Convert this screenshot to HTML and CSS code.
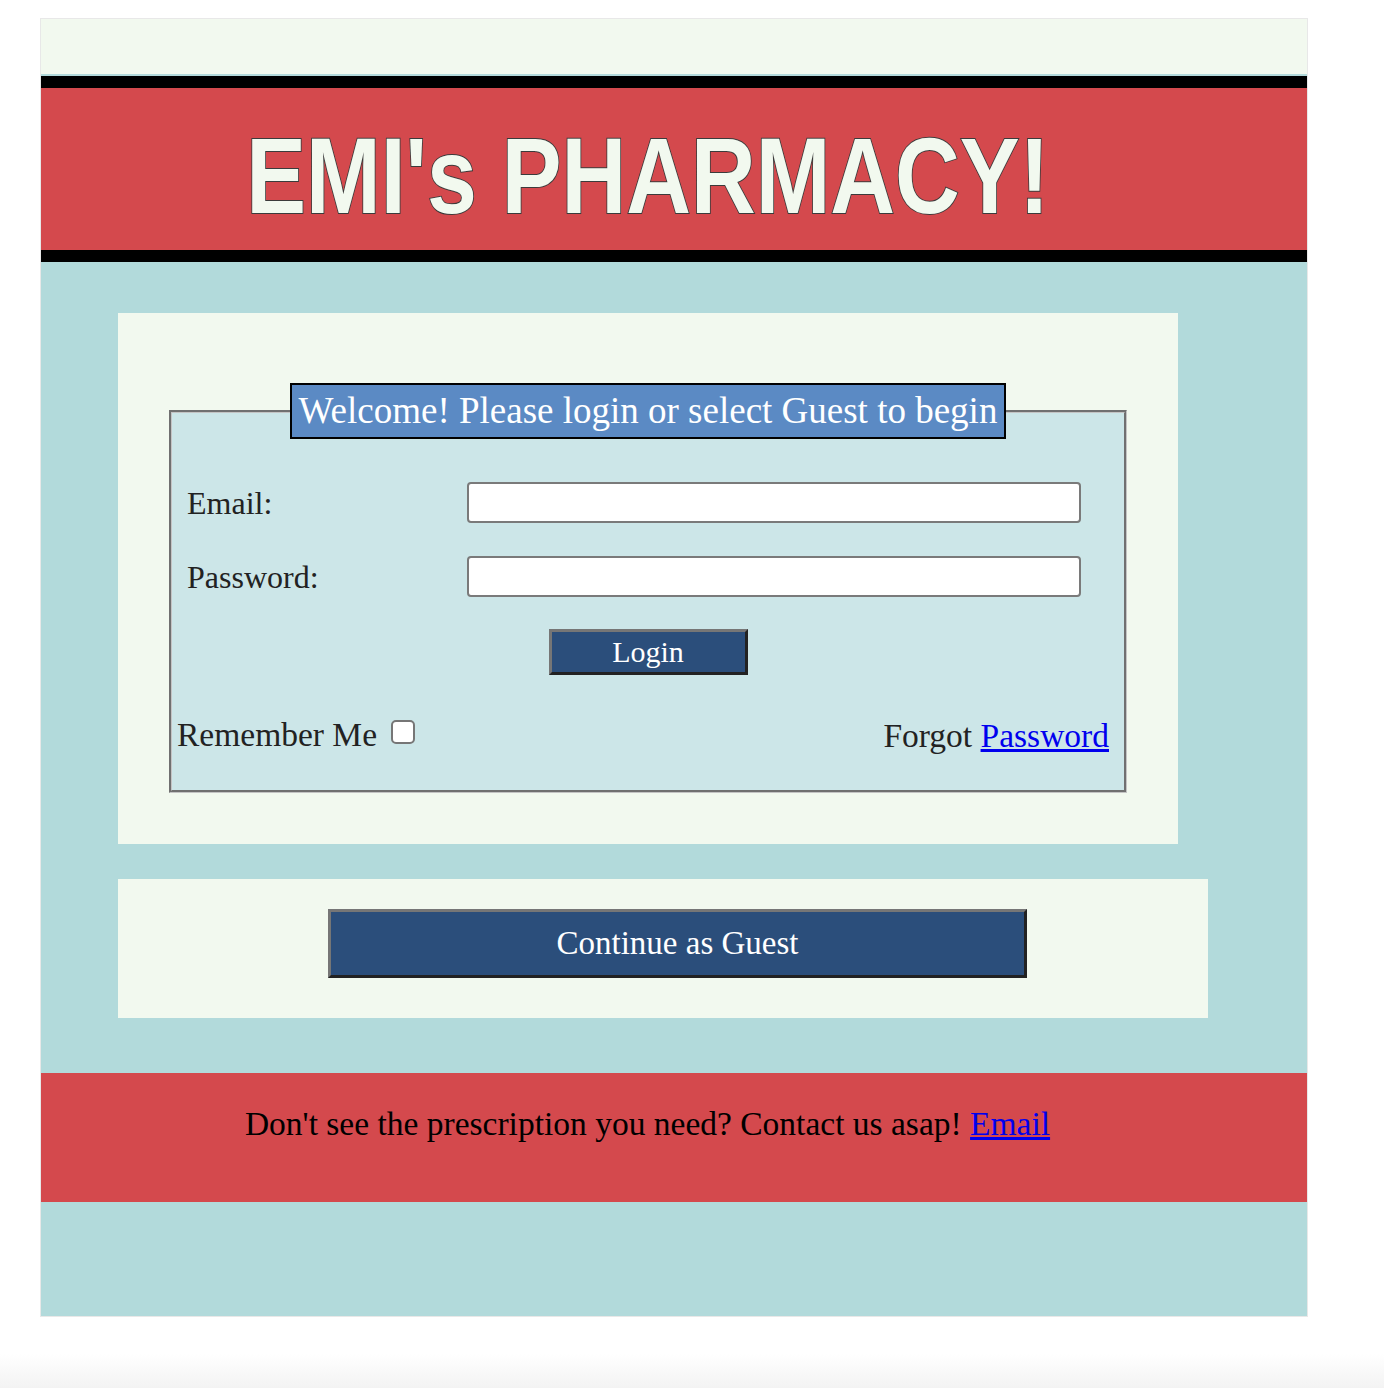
FILE: index.html
```html
<!DOCTYPE html>
<html lang="en">
<head>
    <meta charset="UTF-8">
    <meta name="viewport" content="width=device-width, initial-scale=1.0">
    <title>EMI's Pharmacy</title>
    <link rel="stylesheet" href="styles.css">
</head>
<body>
    <div class="page">
        <div class="topbar"></div>
        <header class="masthead">
            <h1 class="title"><span>EMI's PHARMACY!</span></h1>
        </header>

        <main class="content">
            <section class="login-panel">
                <form id="loginForm">
                    <fieldset class="login-box">
                        <legend>Welcome! Please login or select Guest to begin</legend>
                        <div class="field-row">
                            <label for="email">Email:</label>
                            <input type="email" id="email" name="email">
                        </div>
                        <div class="field-row">
                            <label for="password">Password:</label>
                            <input type="password" id="password" name="password">
                        </div>
                        <div class="btn-row">
                            <button type="submit" class="btn btn-login">Login</button>
                        </div>
                        <div class="extras">
                            <label class="remember">Remember Me <input type="checkbox" name="remember"></label>
                            <span class="forgot">Forgot <a href="#">Password</a></span>
                        </div>
                    </fieldset>
                </form>
            </section>

            <section class="guest-panel">
                <button type="button" class="btn btn-guest">Continue as Guest</button>
            </section>
        </main>

        <footer class="footer">
            <p>Don't see the prescription you need? Contact us asap! <a href="#">Email</a></p>
        </footer>
        <div class="bottom"></div>
    </div>
</body>
</html>
```

FILE: styles.css
```css
html {
    min-height: 100%;
    background: linear-gradient(to bottom, #fff calc(100% - 34px), #f3f3f3);
}
body {
    margin: 0;
    font-family: "Liberation Serif", "Times New Roman", serif;
}
.page {
    width: 1266px;
    margin: 18px 0 0 40px;
    border: 1px solid rgba(0, 0, 0, 0.09);
}
.topbar {
    height: 55px;
    background-color: #f2f9ef;
    border-bottom: 2px solid #b2dadb;
}
.masthead {
    height: 162px;
    background-color: #d4494d;
    border-top: 12px solid #000;
    border-bottom: 12px solid #000;
    padding-right: 53px;
    text-align: center;
}
.title {
    margin: 0;
    padding-top: 14px;
    line-height: 148px;
    font-family: "Liberation Sans", Arial, sans-serif;
    font-size: 108px;
    font-weight: bold;
    color: #f2f9ef;
}
.title span {
    display: inline-block;
    transform: scaleX(0.83);
    -webkit-text-stroke: 2px #3b3b3b;
    paint-order: stroke fill;
}
.content {
    background-color: #b2dadb;
    padding: 51px 0 55px 77px;
}
.login-panel {
    width: 1060px;
    box-sizing: border-box;
    padding: 70px 51px 51px;
    background-color: #f2f9ef;
}
.login-box {
    margin: 0;
    padding: 0 0 36px;
    border: 3px groove #c4c4c4;
    background-color: #cce6e8;
    min-inline-size: 0;
}
.login-box legend {
    margin: 0 auto;
    padding: 6px 7px;
    border: 2px solid #000;
    background-color: #5b8ac4;
    color: #fff;
    font-size: 37px;
    line-height: 40px;
}
.field-row {
    display: flex;
    align-items: center;
    height: 41px;
    margin-top: 33px;
    padding-left: 15px;
}
.field-row:first-of-type {
    margin-top: 43px;
}
.field-row label {
    width: 280px;
    font-size: 32px;
    line-height: 37px;
    padding-top: 2px;
    color: #222;
}
.field-row input {
    width: 614px;
    height: 41px;
    box-sizing: border-box;
    border: 2px solid #7a7a7a;
    border-radius: 4px;
    background-color: #fff;
}
.btn-row {
    margin-top: 32px;
    text-align: center;
}
.btn {
    border-style: solid;
    border-width: 3px;
    border-color: #767676 #222 #222 #767676;
    background-color: #2b4e7b;
    color: #fff;
    font-family: "Liberation Serif", "Times New Roman", serif;
    padding: 0;
    cursor: pointer;
}
.btn-login {
    width: 199px;
    height: 46px;
    font-size: 30px;
}
.extras {
    display: flex;
    justify-content: space-between;
    margin-top: 41px;
    padding: 0 15px 0 5px;
    font-size: 33.5px;
    line-height: 37px;
    color: #222;
}
.remember {
    display: flex;
    align-items: flex-start;
}
.remember input {
    appearance: none;
    width: 24px;
    height: 24px;
    margin: 4px 0 0 14px;
    border: 2px solid #767676;
    border-radius: 5px;
    background-color: #fff;
}
.forgot {
    padding-top: 1px;
}
a {
    color: #0000ee;
}
.guest-panel {
    width: 1090px;
    margin-top: 35px;
    box-sizing: border-box;
    padding: 30px 0 40px 210px;
    background-color: #f2f9ef;
}
.btn-guest {
    display: block;
    width: 699px;
    height: 69px;
    font-size: 33px;
}
.footer {
    height: 129px;
    box-sizing: border-box;
    padding: 32px 53px 0 0;
    background-color: #d4494d;
    text-align: center;
}
.footer p {
    margin: 0;
    font-size: 33.5px;
    line-height: 37px;
    color: #000;
}
.bottom {
    height: 114px;
    background-color: #b2dadb;
}
```
